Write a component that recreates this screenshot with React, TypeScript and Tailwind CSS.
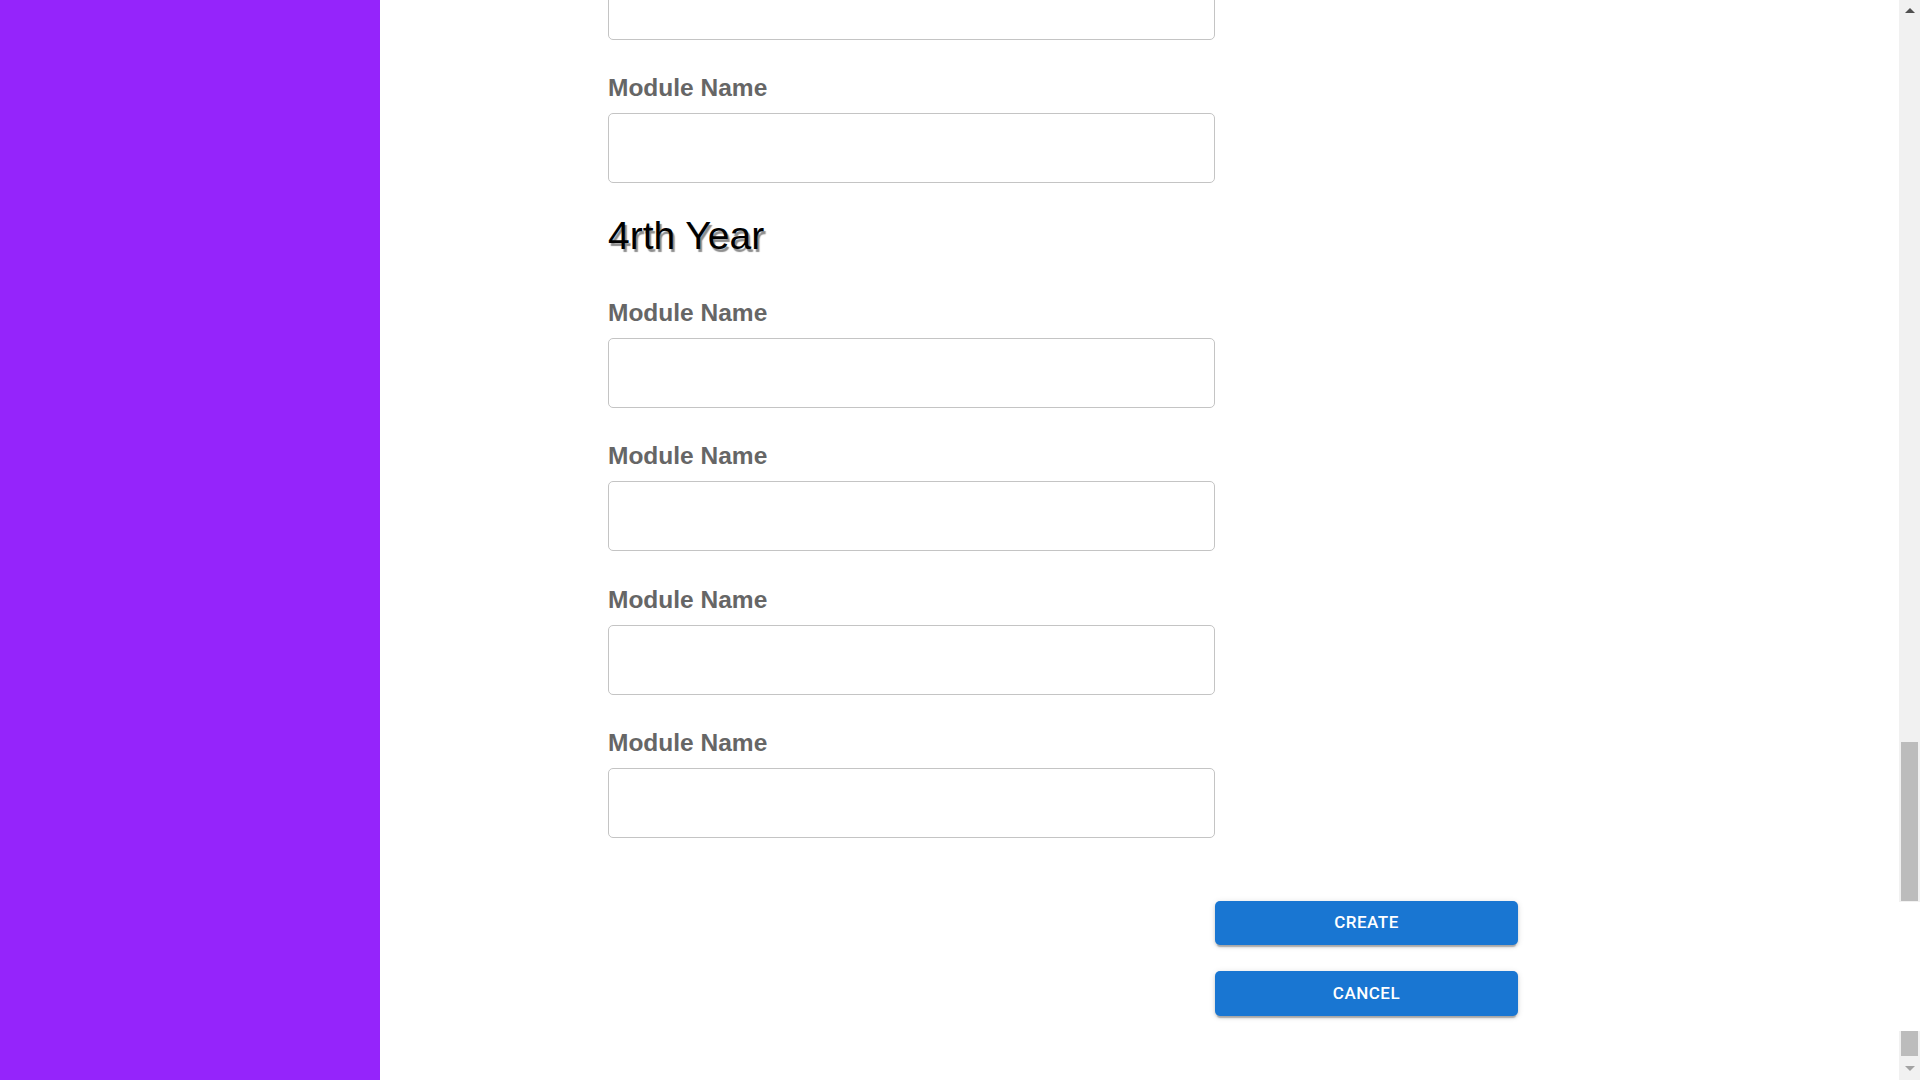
import React from 'react';

const labelCls =
  "h-[30px] leading-[30px] text-[24.5px] font-bold text-[#666666] font-['Liberation_Sans',Arial,sans-serif]";
const inputCls =
  'block h-[70px] w-full rounded-[5px] border border-[#c4c4c4] bg-white px-4 outline-none';

function Field({ className = '' }: { className?: string }) {
  return (
    <div className={className}>
      <label className={labelCls}>Module Name</label>
      <input type="text" className={`${inputCls} mt-[10px]`} />
    </div>
  );
}

function Scrollbar() {
  return (
    <div className="flex w-[21px] shrink-0 flex-col">
      <div className="flex h-[902px] flex-col bg-[#f1f1f1]">
        <div className="flex h-[21px] items-center justify-center">
          <div className="h-0 w-0 border-x-[5px] border-b-[5px] border-x-transparent border-b-[#505050]" />
        </div>
        <div className="h-[721px]" />
        <div className="mx-[2px] h-[159px] bg-[#bcbcbc]" />
      </div>
      <div className="h-[129px] bg-white" />
      <div className="flex flex-1 flex-col bg-[#f1f1f1]">
        <div className="mx-[2px] h-[25px] bg-[#bcbcbc]" />
        <div className="flex flex-1 items-center justify-center">
          <div className="h-0 w-0 border-x-[5px] border-t-[5px] border-x-transparent border-t-[#a3a3a3]" />
        </div>
      </div>
    </div>
  );
}

export default function App() {
  return (
    <div className="flex h-screen w-full overflow-hidden bg-white">
      <aside className="w-[380px] shrink-0 bg-[#9524fb]" />

      <main className="flex-1 overflow-hidden pl-[228px]">
        <div className="w-[607px]">
          <input type="text" className={`${inputCls} -mt-[30px]`} />
          <Field className="mt-[33px]" />

          <h2 className="mt-[31px] h-[44px] leading-[44px] text-[39px] text-black font-['Liberation_Sans',Arial,sans-serif] [text-shadow:2px_3px_1px_rgba(0,0,0,0.45)]">
            4rth Year
          </h2>

          <Field className="mt-[40px]" />
          <Field className="mt-[33px]" />
          <Field className="mt-[34px]" />
          <Field className="mt-[33px]" />
        </div>

        <div className="ml-[607px] mt-[63px] flex w-[303px] flex-col gap-[26px] font-['Roboto',sans-serif]">
          <button className="h-[44px] rounded-[5px] bg-[#1976d2] text-[17px] font-medium uppercase tracking-[0.5px] text-white shadow-[0_4px_1px_-2px_rgba(0,0,0,0.2),0_2px_3px_0_rgba(0,0,0,0.14),0_1px_6px_0_rgba(0,0,0,0.12)]">
            Create
          </button>
          <button className="h-[45px] rounded-[5px] bg-[#1976d2] text-[17px] font-medium uppercase tracking-[0.5px] text-white shadow-[0_4px_1px_-2px_rgba(0,0,0,0.2),0_2px_3px_0_rgba(0,0,0,0.14),0_1px_6px_0_rgba(0,0,0,0.12)]">
            Cancel
          </button>
        </div>
      </main>

      <Scrollbar />
    </div>
  );
}
